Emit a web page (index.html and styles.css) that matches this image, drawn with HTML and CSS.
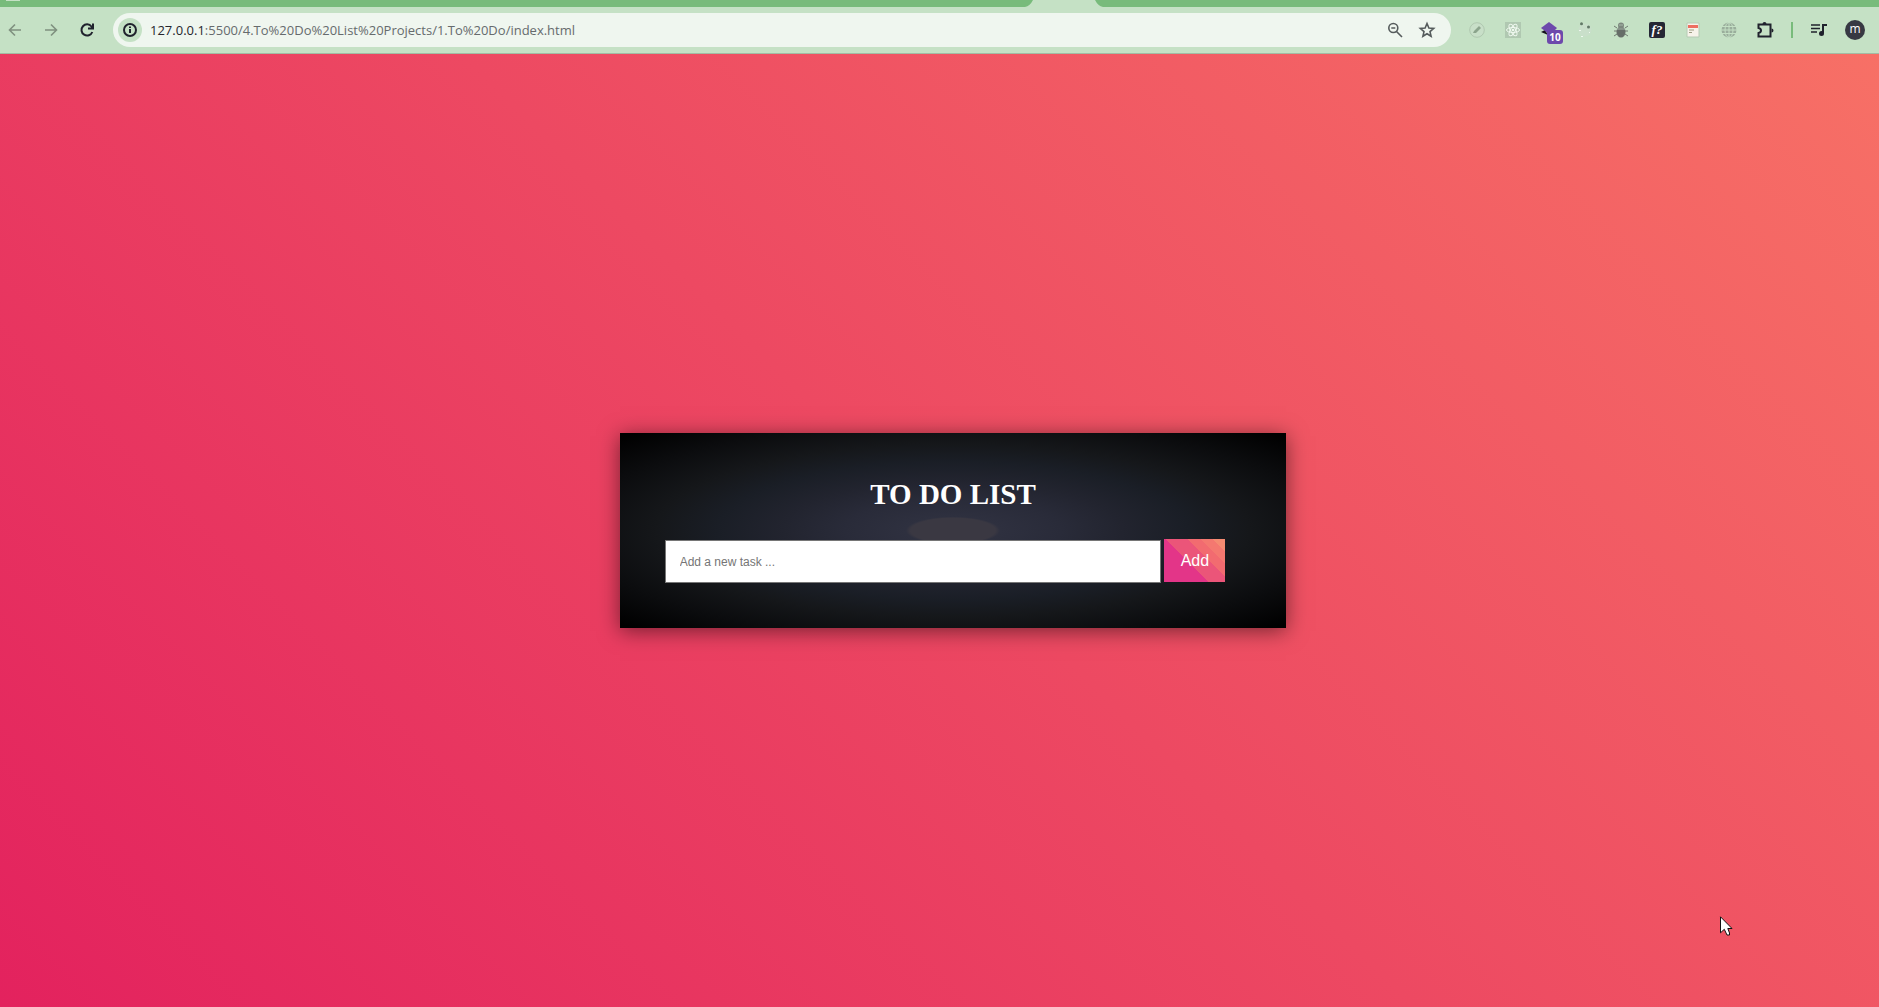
FILE: index.html
```html
<!DOCTYPE html>
<html lang="en">
<head>
<meta charset="utf-8">
<title>To Do List</title>
<link rel="stylesheet" href="styles.css">
</head>
<body>
<header class="browser">
  <div class="tabs">
    <span class="tab-search"></span>
    <svg class="tab" width="62" height="7" viewBox="0 0 62 7"><path d="M0 0h62q3 6 8 7H-8Q-3 6 0 0z"/></svg>
  </div>
  <div class="toolbar">
    <nav class="group">
      <button class="icon dim" aria-label="Back"><svg width="16" height="16" viewBox="0 0 16 16"><path class="line" d="M14 8H3M8 2.500L2.500 8L8 13.500"/></svg></button>
      <button class="icon dim" aria-label="Forward"><svg width="16" height="16" viewBox="0 0 16 16"><path class="line" d="M2 8h11M8 2.500L13.500 8L8 13.500"/></svg></button>
      <button class="icon" aria-label="Reload"><svg width="16" height="16" viewBox="0 0 16 16"><path class="line heavy" d="M13.300 10A5.600 5.600 0 1 1 12.500 4.500L14 6.500M14 1.500V6.500H9"/></svg></button>
    </nav>
    <div class="omnibox">
      <button class="info" aria-label="Site information"><svg width="16" height="16" viewBox="0 0 16 16"><circle class="line heavy" cx="8" cy="8" r="6"/><path d="M7 7h2v4H7zM7 4.500h2v1.600H7z"/></svg></button>
      <div class="url"><span class="host">127.0.0.1</span>:5500/4.To%20Do%20List%20Projects/1.To%20Do/index.html</div>
      <button class="icon grey" aria-label="Zoom"><svg width="16" height="16" viewBox="0 0 16 16"><circle class="line" cx="6.300" cy="6" r="4.500"/><path class="line" d="M4.300 6h4M9.500 9.500L15 15"/></svg></button>
      <button class="icon grey" aria-label="Bookmark"><svg width="18" height="18" viewBox="0 0 18 18"><path class="line" d="M9 2.500L10.900 7L15.700 7.400L12 10.600L13.100 15.300L9 12.800L4.900 15.300L6 10.600L2.300 7.400L7.100 7z"/></svg></button>
    </div>
    <div class="group">
      <button class="icon" aria-label="Edit extension"><svg width="16" height="16" viewBox="0 0 16 16"><circle cx="8" cy="8" r="7.300" fill="#c8dfc8" stroke="#b0c8b0"/><path d="M4 11l1-2 5-5 2 2-5 5z" fill="#8ba48c"/></svg></button>
      <button class="icon" aria-label="React extension"><svg width="16" height="16" viewBox="0 0 16 16"><path fill="#b0c8b1" d="M0 0h16v16H0z"/><g fill="none" stroke="#eff8ef"><ellipse cx="8" cy="8" rx="6.500" ry="2.500"/><ellipse cx="8" cy="8" rx="6.500" ry="2.500" transform="rotate(60 8 8)"/><ellipse cx="8" cy="8" rx="6.500" ry="2.500" transform="rotate(120 8 8)"/></g><circle cx="8" cy="8" r="1.300" fill="#eff8ef"/></svg></button>
      <button class="icon badged" aria-label="Layers extension"><svg width="18" height="16" viewBox="0 0 18 16"><path fill="#15131c" d="M1 10l4-2 3 5z"/><path fill="#6d49ac" d="M9 0l8 6-3 3-5 3-8-6z"/></svg><span class="badge">10</span></button>
      <button class="icon" aria-label="Dots extension"><svg width="16" height="16" viewBox="0 0 16 16"><circle cx="8" cy="8" r="6.500" fill="#c9dfca"/><circle cx="4.500" cy="1.800" r="1.500" fill="#627867"/><circle cx="11.500" cy="5" r="1.500" fill="#627867"/><path d="M2 8h2v1H2zM4 14h2v1H4zM12 10h1v1h-1z" fill="#eef8ef"/></svg></button>
      <button class="icon" aria-label="Bug extension"><svg width="16" height="16" viewBox="0 0 16 16"><path d="M4 6L1 4M4 9H1M4 12l-3 2M12 6l3-2M12 9h3M12 12l3 2" stroke="#707971" fill="none"/><ellipse cx="8" cy="10" rx="4.500" ry="5.500" fill="#666d68"/><circle cx="8" cy="3.500" r="3" fill="#7d887e"/><path d="M6 3h4M4 7h8" stroke="#a8b8a9"/></svg></button>
      <button class="icon" aria-label="Font finder extension"><span class="font-mark">f?</span></button>
      <button class="icon" aria-label="Page extension"><svg width="16" height="16" viewBox="0 0 16 16"><path d="M2 1h12v14H2z" fill="#f7f3ea" stroke="#b6cbb5"/><path d="M3 3h10v3H3z" fill="#ee6f61"/><path d="M4 8h5M4 10.500h3" stroke="#9c9b80"/></svg></button>
      <button class="icon" aria-label="Globe extension"><svg width="16" height="16" viewBox="0 0 16 16"><circle cx="8" cy="8" r="7.500" fill="#9aae9c"/><g fill="none" stroke="#c5e1c5"><path d="M8 0v16M0 8h16M1 4.500h14M1 11.500h14"/><ellipse cx="8" cy="8" rx="4" ry="7.500"/></g></svg></button>
      <button class="icon" aria-label="Extensions"><svg width="18" height="18" viewBox="0 0 18 18"><path class="line heavy" d="M2.500 3.500H14.500v12H2.500v-3.500Q5 11.500 5 9.500T2.500 7z"/><path d="M6.500 3a2 2 0 0 1 4 0zM15.500 7.500a2 2 0 0 1 0 4z"/></svg></button>
    </div>
    <span class="divider"></span>
    <div class="group">
      <button class="icon" aria-label="Media controls"><svg width="16" height="14" viewBox="0 0 16 14"><path class="line" d="M0 2h9M0 5.500h9M0 9h6"/><path d="M11 1h5v2h-3v7h-2z"/><circle cx="10.500" cy="10.500" r="2.500"/></svg></button>
      <button class="icon" aria-label="Profile"><span class="avatar">m</span></button>
    </div>
  </div>
</header>
<main class="page">
  <section class="card">
    <h1 class="title">TO DO LIST</h1>
    <form class="entry">
      <input class="task" type="text" aria-label="New task" placeholder="Add a new task ...">
      <button class="add" type="button">Add</button>
    </form>
  </section>
</main>
<svg class="cursor" width="13" height="20" viewBox="0 0 13 20"><path d="M.5 .8v16L4.300 13.300L7 19H9.500V17L7.800 12.500H12z" fill="#fff" stroke="#111"/></svg>
</body>
</html>
```
FILE: styles.css
```css
* { box-sizing: border-box; }
body {
  margin: 0;
  min-height: 100vh;
  display: flex;
  flex-direction: column;
  overflow: hidden;
  font-family: "Liberation Serif", serif;
}
button { border: 0; padding: 0; background: none; color: inherit; }
svg { display: block; overflow: visible; fill: currentColor; }
.line { fill: none; stroke: currentColor; stroke-width: 1.6; }
.heavy { stroke-width: 2; }

.tabs {
  display: flex;
  justify-content: space-between;
  height: 7px;
  overflow: hidden;
  background: #78bb7b;
}
.tab-search { width: 14px; height: 1px; margin-left: 6px; background: #c5e1c5; }
.tab { margin-right: 784px; color: #c5e1c5; }
.toolbar {
  display: flex;
  align-items: center;
  gap: 12px;
  height: 47px;
  padding: 0 10px 0 1px;
  background: #c5e1c5;
  border-bottom: 1px solid #a3bba3;
  color: #20222d;
}
.group { display: flex; gap: 8px; }
.icon {
  display: flex;
  align-items: center;
  justify-content: center;
  width: 28px;
  height: 28px;
}
.dim { color: #7f907f; }
.grey { color: #555b5c; }
.omnibox {
  display: flex;
  flex: 1;
  align-items: center;
  gap: 4px;
  height: 34px;
  padding: 0 10px 0 5px;
  border-radius: 17px;
  background: #eff6ef;
}
.info {
  display: flex;
  align-items: center;
  justify-content: center;
  width: 24px;
  height: 24px;
  border-radius: 50%;
  background: #c5e1c5;
}
.url {
  flex: 1;
  padding-left: 4px;
  color: #666b6d;
  font: 13px/20px "Open Sans", sans-serif;
}
.host { color: #25252d; }
.badged { position: relative; }
.badge {
  position: absolute;
  left: 12px;
  top: 14px;
  width: 16px;
  border-radius: 3px;
  background: #6d49ac;
  color: #fff;
  font: bold 10px/14px "Open Sans", sans-serif;
}
.font-mark {
  width: 16px;
  height: 16px;
  border-radius: 2px;
  background: #252735;
  color: #fff;
  font: italic bold 13px/15px "Liberation Serif", serif;
}
.divider { width: 2px; height: 16px; background: #78bb7b; }
.avatar {
  width: 20px;
  height: 20px;
  border-radius: 50%;
  background: #373943;
  color: #fff;
  font: 12px/18px "Open Sans", sans-serif;
}

.page {
  display: flex;
  flex: 1;
  align-items: center;
  justify-content: center;
  padding-left: 27px;
  background: linear-gradient(45deg, #e3225e, #ed4962 50%, #f77066);
}
.card {
  width: 36%;
  padding: 45px;
  background: radial-gradient(#3a3842 9%, #2e303f 10%, #292b39 23%, #22242f 36%, #1a1e26 50%, #15171a 63%, #0b0c0e 80%, #000 98%);
  box-shadow: 0 3px 20px rgba(0, 0, 0, 0.5);
}
.title {
  margin: 0 0 28px;
  color: #fff;
  font-size: 29px;
  line-height: 33px;
  text-align: center;
}
.entry { display: flex; gap: 3px; margin-right: 16px; }
.task {
  flex: 1;
  min-width: 0;
  height: 43px;
  margin-top: 1px;
  padding: 0 14px;
  border: 1px solid #767676;
  background: #fff;
  font: 12px "Liberation Sans", sans-serif;
}
.task::placeholder { color: #757575; }
.add {
  width: 61px;
  height: 43px;
  background: linear-gradient(45deg, #e33588 43%, #eb5579 43% 64%, #f26b70 64% 76%, #f47870 76% 88%, #f58b72 88%);
  color: #fff;
  font: 16px "Liberation Sans", sans-serif;
}
.cursor { position: absolute; left: 91.54%; top: 916px; }
```
